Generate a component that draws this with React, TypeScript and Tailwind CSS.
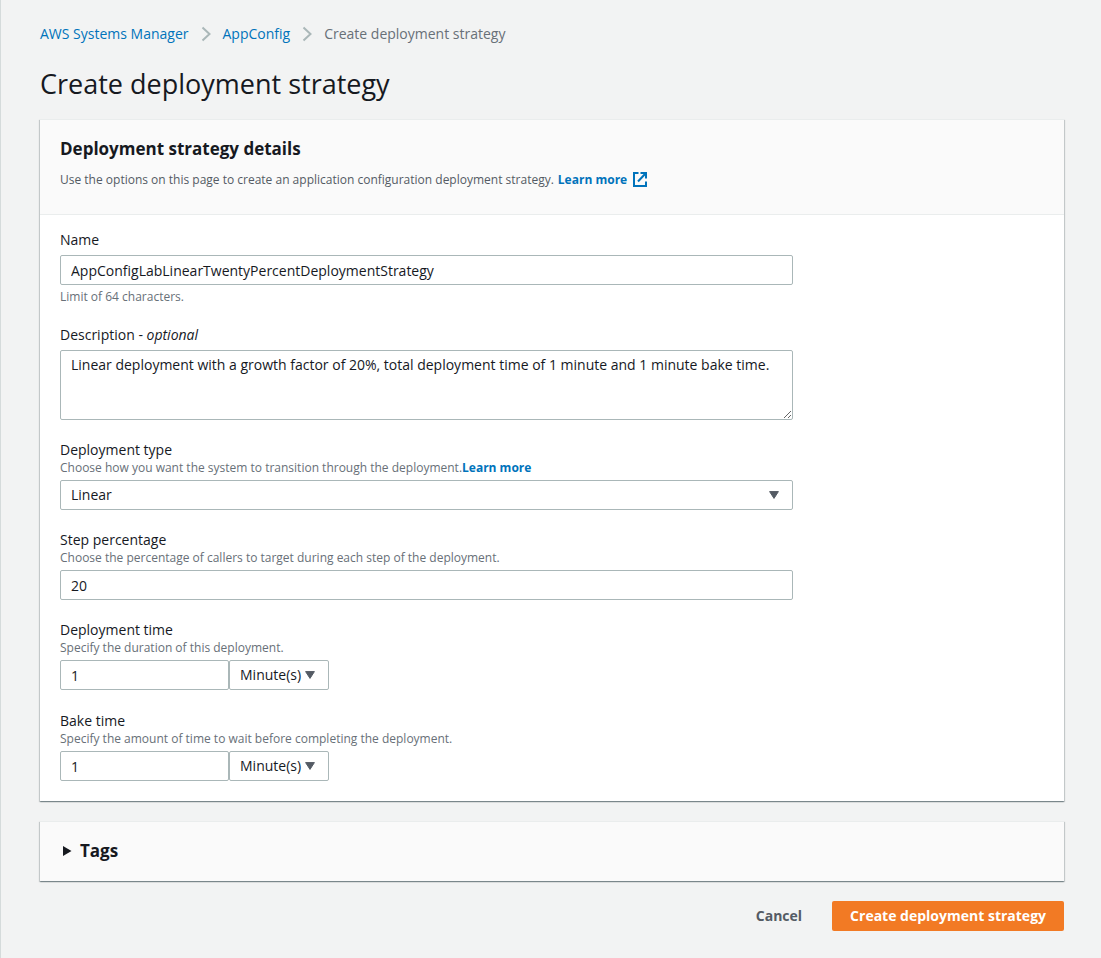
import type { ReactNode } from 'react';

const control =
  'rounded-xs border border-[#aab7b8] bg-white text-sm text-[#16191f] outline-none focus:border-[#00a1c9]';
const panel =
  'border-t border-[#eaeded] shadow-[0_1px_1px_0_rgba(0,28,36,0.3),1px_1px_1px_0_rgba(0,28,36,0.15),-1px_1px_1px_0_rgba(0,28,36,0.15)]';

function Chevron() {
  return (
    <svg className="mx-[11px] h-4 w-3 shrink-0" viewBox="0 0 12 16" fill="none" stroke="#aab7b8" strokeWidth="2" aria-hidden="true">
      <path d="M2.500 1.500 9.500 8l-7 6.500" />
    </svg>
  );
}

function ExternalIcon() {
  return (
    <svg className="h-4 w-4 shrink-0" viewBox="0 0 16 16" fill="none" stroke="#0073bb" strokeWidth="2" aria-hidden="true">
      <path d="M6.500 1H2v13h12V9.500" />
      <path d="M8.500 1H14v5.500M13.500 1.500 6 9.500" />
    </svg>
  );
}

function Caret({ className }: { className: string }) {
  return (
    <svg className={`pointer-events-none absolute top-1/2 h-2 w-[10px] -translate-y-1/2 ${className}`} viewBox="0 0 10 8" aria-hidden="true">
      <path d="M.6 .6h8.800L5 7.400z" fill="#545b64" stroke="#545b64" strokeWidth="1" strokeLinejoin="round" />
    </svg>
  );
}

type FieldProps = { id: string; label: ReactNode; hint?: ReactNode; children: ReactNode };

function Field({ id, label, hint, children }: FieldProps) {
  return (
    <div className="flex flex-col">
      <label htmlFor={id} className="text-sm leading-5">
        {label}
      </label>
      {hint && <p className="text-xs leading-4 text-[#687078]">{hint}</p>}
      <div className={hint ? 'mt-1' : 'mt-[5px]'}>{children}</div>
    </div>
  );
}

function Duration({ id, unitLabel }: { id: string; unitLabel: string }) {
  return (
    <div className="flex min-h-[31px] items-start">
      <input id={id} type="text" defaultValue="1" className={`h-[30px] w-[169px] px-[10px] ${control}`} />
      <div className="relative">
        <select aria-label={unitLabel} className={`h-[30px] w-[100px] appearance-none pl-[10px] ${control}`}>
          <option>Minute(s)</option>
          <option>Hour(s)</option>
        </select>
        <Caret className="right-[14px]" />
      </div>
    </div>
  );
}

export default function App() {
  return (
    <main className="min-h-screen border-l border-[#d5dbdb] bg-[#f2f3f3] pt-6 pr-[37px] pb-[27px] pl-[39px] font-['Open_Sans',sans-serif] text-[#16191f]">
      <nav aria-label="Breadcrumb" className="flex h-5 items-center text-sm leading-5">
        <a href="#systems-manager" className="text-[#0073bb]">AWS Systems Manager</a>
        <Chevron />
        <a href="#appconfig" className="text-[#0073bb]">AppConfig</a>
        <Chevron />
        <span className="text-[#687078]">Create deployment strategy</span>
      </nav>

      <h1 className="mt-[22px] text-[27px] leading-9">Create deployment strategy</h1>

      <form onSubmit={(e) => e.preventDefault()}>
        <section className={`mt-[17px] bg-white ${panel}`}>
          <header className="border-b border-[#eaeded] bg-[#fafafa] px-5 pt-[18px] pb-[26px]">
            <h2 className="text-[17px] leading-[22px] font-bold">Deployment strategy details</h2>
            <p className="mt-3 flex h-4 items-center text-xs leading-4 text-[#545b64]">
              Use the options on this page to create an application configuration deployment strategy.
              <a href="#learn-more" className="ml-1 flex items-center gap-[5px] font-bold text-[#0073bb]">
                Learn more <ExternalIcon />
              </a>
            </p>
          </header>

          <div className="grid grid-cols-4 gap-5 px-5 pt-[15px] pb-[19px]">
            <div className="col-span-3 flex flex-col gap-5">
              <Field id="name" label="Name">
                <input
                  id="name"
                  type="text"
                  defaultValue="AppConfigLabLinearTwentyPercentDeploymentStrategy"
                  className={`block h-[30px] w-full px-[10px] ${control}`}
                />
                <p className="mt-1 text-xs leading-4 text-[#687078]">Limit of 64 characters.</p>
              </Field>

              <Field id="description" label={<>Description - <i>optional</i></>}>
                <textarea
                  id="description"
                  defaultValue="Linear deployment with a growth factor of 20%, total deployment time of 1 minute and 1 minute bake time."
                  className={`block h-[70px] w-full resize px-[10px] py-1 leading-5 ${control}`}
                />
              </Field>

              <Field
                id="type"
                label="Deployment type"
                hint={
                  <>
                    Choose how you want the system to transition through the deployment.
                    <a href="#deployment-type" className="font-bold text-[#0073bb]">Learn more</a>
                  </>
                }
              >
                <div className="relative">
                  <select id="type" className={`block h-[30px] w-full appearance-none px-[10px] ${control}`}>
                    <option>Linear</option>
                    <option>Exponential</option>
                  </select>
                  <Caret className="right-[14px]" />
                </div>
              </Field>

              <Field
                id="step"
                label="Step percentage"
                hint="Choose the percentage of callers to target during each step of the deployment."
              >
                <input id="step" type="text" defaultValue="20" className={`block h-[30px] w-full px-[10px] ${control}`} />
              </Field>

              <Field id="deployment-time" label="Deployment time" hint="Specify the duration of this deployment.">
                <Duration id="deployment-time" unitLabel="Deployment time unit" />
              </Field>

              <Field
                id="bake-time"
                label="Bake time"
                hint="Specify the amount of time to wait before completing the deployment."
              >
                <Duration id="bake-time" unitLabel="Bake time unit" />
              </Field>
            </div>
          </div>
        </section>

        <section className={`mt-5 bg-[#fafafa] ${panel}`}>
          <h2>
            <button type="button" aria-expanded="false" className="flex h-[59px] w-full items-center gap-2 px-[22px] pb-[2px] text-[17px] font-bold">
              <svg className="h-[10px] w-[10px]" viewBox="0 0 10 10" aria-hidden="true">
                <path d="M1 0v10l8.500-5z" fill="#16191f" />
              </svg>
              Tags
            </button>
          </h2>
        </section>

        <div className="mt-5 flex items-center justify-end gap-3">
          <button type="button" className="h-[30px] px-[18px] text-sm font-bold text-[#545b64]">
            Cancel
          </button>
          <button type="submit" className="h-[30px] rounded-xs bg-[#f27a24] px-[18px] text-sm font-bold text-white">
            Create deployment strategy
          </button>
        </div>
      </form>
    </main>
  );
}
